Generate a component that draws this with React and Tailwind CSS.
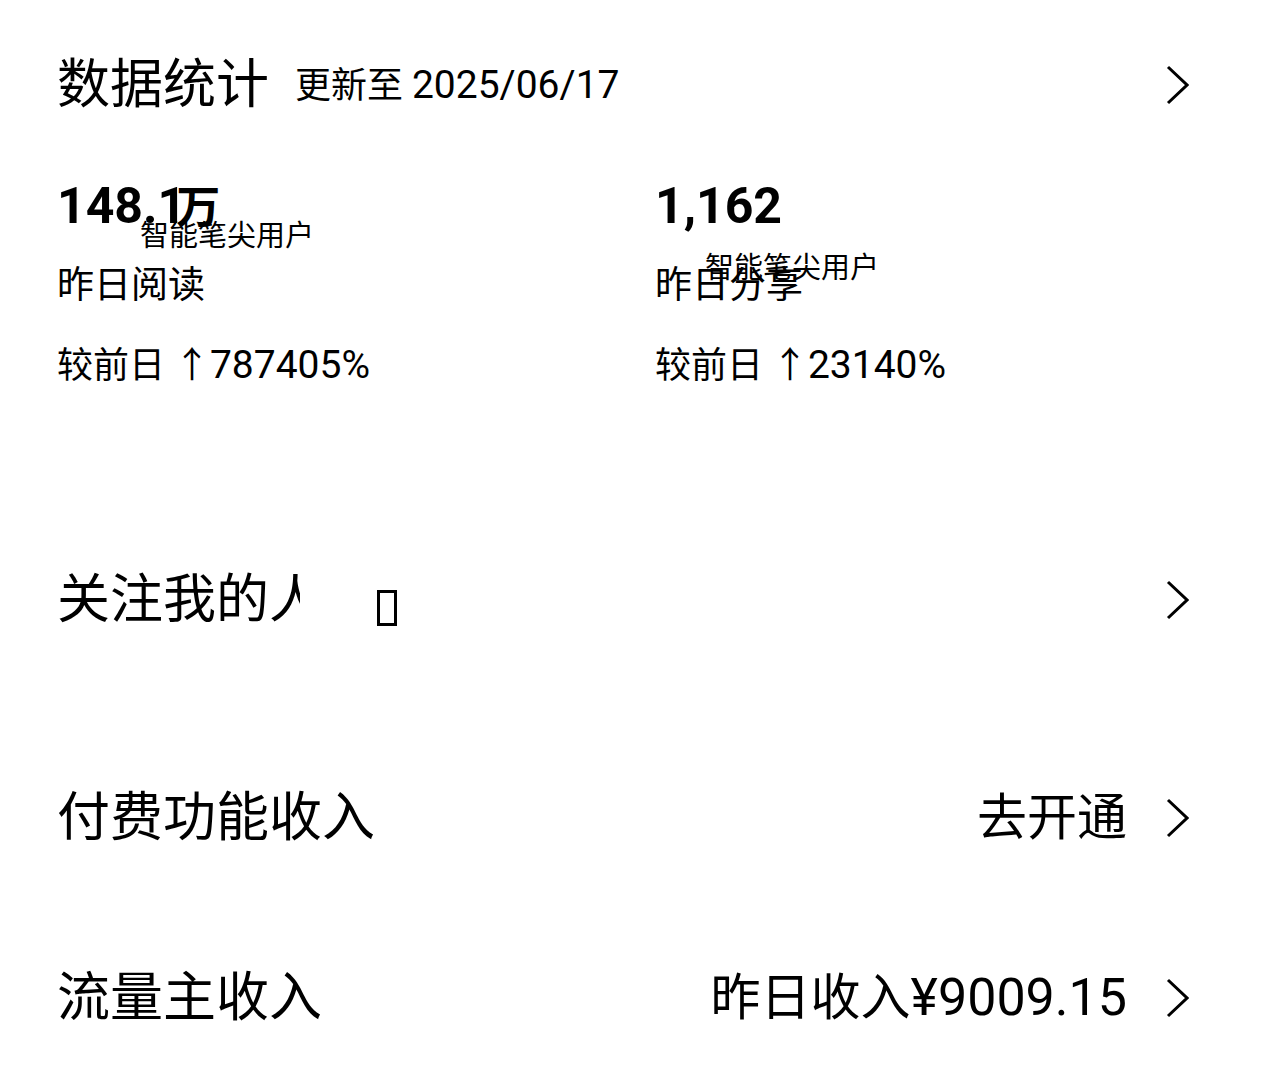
import React from 'react';

const font = { fontFamily: 'Roboto, "Noto Sans CJK SC", sans-serif' };

const Chevron = () => (
  <svg width="24" height="40" viewBox="0 0 24 40" className="shrink-0">
    <path d="M3 2 L22 20 L3 38" fill="none" stroke="#000" strokeWidth="3" />
  </svg>
);

const Stat = ({ value, unit, label, change, overlayClass }) => (
  <div className="relative">
    <div className="h-[60px] leading-[60px] text-[50px] font-bold whitespace-nowrap">
      {value}
      {unit && <span className="text-[44px] ml-[-10px]">{unit}</span>}
    </div>
    <div className="mt-[20px] h-[60px] leading-[60px] text-[37px]">{label}</div>
    <div className="mt-[19px] h-[60px] leading-[60px] text-[36px] whitespace-nowrap">
      较前日 ↑<span className="text-[39px]">{change}</span>
    </div>
    <div className={`absolute text-[29px] leading-none whitespace-nowrap ${overlayClass}`}>
      智能笔尖用户
    </div>
  </div>
);

const Row = ({ title, right, children, className }) => (
  <div className={`h-[80px] flex items-center justify-between ${className}`}>
    <div className="flex items-center text-[53px] leading-none whitespace-nowrap">{title}{children}</div>
    <div className="flex items-center gap-[38px]">
      {right && <span className="text-[50px] leading-none whitespace-nowrap">{right}</span>}
      <Chevron />
    </div>
  </div>
);

export default function App() {
  return (
    <div className="w-[1280px] h-[1085px] bg-white text-black pl-[57px] pr-[91px]" style={font}>
      <div className="h-[170px] flex items-center justify-between">
        <div className="flex items-center whitespace-nowrap">
          <span className="text-[53px] leading-none">数据统计</span>
          <span className="ml-[26px] text-[36px] leading-none">
            更新至 <span className="text-[39px]">2025/06/17</span>
          </span>
        </div>
        <Chevron />
      </div>

      <div className="pt-[6px] grid grid-cols-[598px_1fr]">
        <Stat value="148.1" unit="万" label="昨日阅读" change="787405%" overlayClass="left-[83px] top-[46px]" />
        <Stat value="1,162" label="昨日分享" change="23140%" overlayClass="left-[50px] top-[78px]" />
      </div>

      <Row title="关注我的" className="mt-[165px]">
        <span className="inline-block w-[31px] overflow-hidden whitespace-nowrap">人</span>
        <span className="ml-[77px] mt-[16px] inline-block w-[20px] h-[36px] border-[3px] border-black" />
      </Row>

      <Row title="付费功能收入" right="去开通" className="mt-[138px]" />

      <Row
        title="流量主收入"
        right={<>昨日收入<span className="text-[52px]">¥9009.15</span></>}
        className="mt-[100px]"
      />
    </div>
  );
}
